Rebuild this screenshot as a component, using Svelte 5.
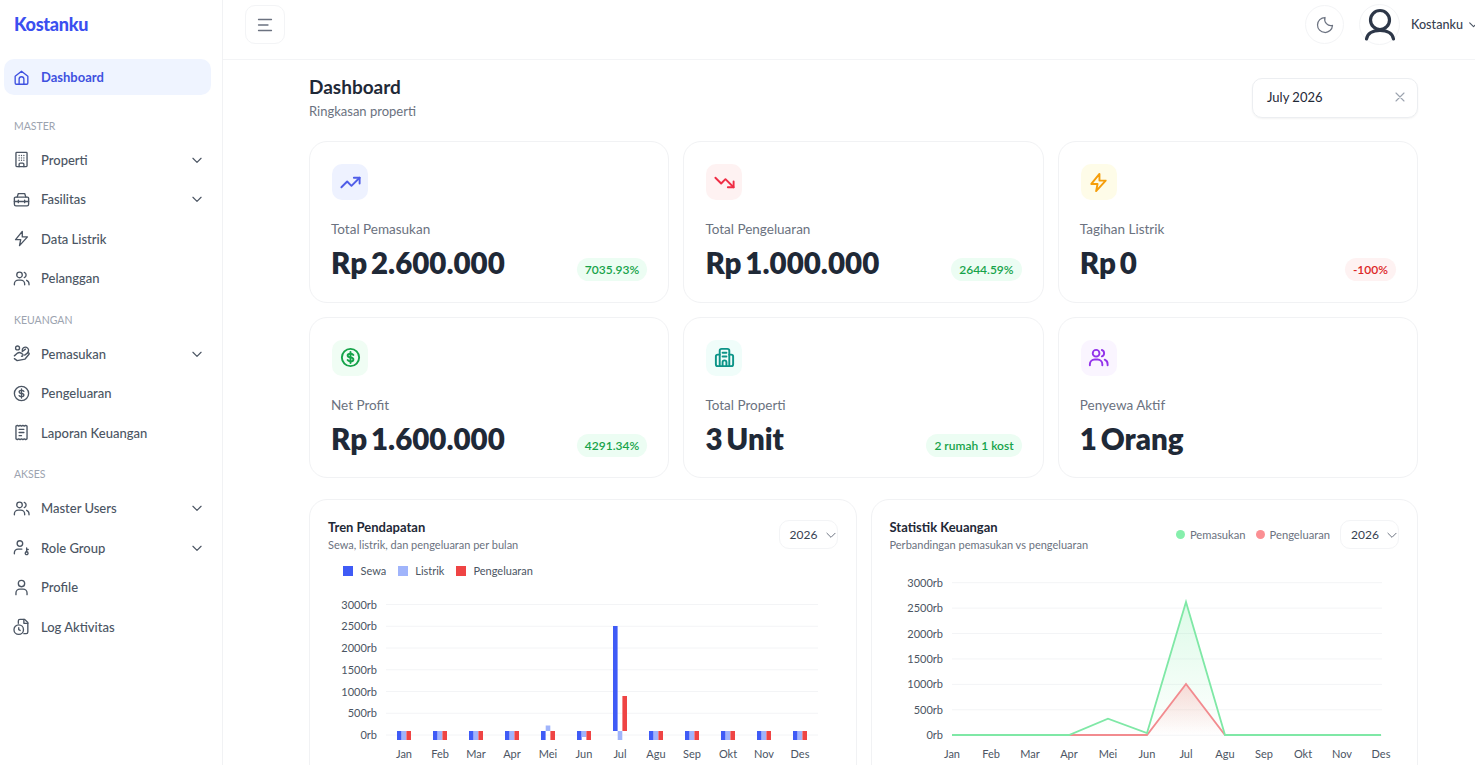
<script>
  const icons = {
    home: ['M4 10.500 12 4l8 6.500V19a1.500 1.500 0 0 1-1.500 1.500h-13A1.500 1.500 0 0 1 4 19z', 'M9 20.500V14a3 3 0 0 1 6 0v6.500'],
    building: ['M6 3h12a1 1 0 0 1 1 1v16a1 1 0 0 1-1 1H6a1 1 0 0 1-1-1V4a1 1 0 0 1 1-1z', 'M9 21v-3a1.500 1.500 0 0 1 1.500-1.500h3A1.500 1.500 0 0 1 15 18v3', 'M9 7h.01M12 7h.01M15 7h.01M9 10h.01M12 10h.01M15 10h.01M9 13h.01M12 13h.01M15 13h.01'],
    toolbox: ['M4.500 9h15A1.500 1.500 0 0 1 21 10.500V18a2 2 0 0 1-2 2H5a2 2 0 0 1-2-2v-7.500A1.500 1.500 0 0 1 4.500 9z', 'M6.500 9l1.500-4.500h8L17.500 9', 'M3 14.500h18', 'M8 13v3M16 13v3'],
    zap: ['M13 3 4.500 13.500H11L9.500 21 19.500 10H13z'],
    users: ['M9.500 11a3.500 3.500 0 1 0 0-7 3.500 3.500 0 0 0 0 7z', 'M3 20v-1a5 5 0 0 1 5-5h3a5 5 0 0 1 5 5v1', 'M15.500 4.200a3.500 3.500 0 0 1 0 6.600', 'M18.500 14.300A5 5 0 0 1 21.500 19v1'],
    hand: ['M7 7.500a2.500 2.500 0 1 0 0-5 2.500 2.500 0 0 0 0 5z', 'M3 15l4-3.500c1.500-1.200 3-1 4.500 0l2 1.500a1.400 1.400 0 0 1-1.500 2.300', 'M3 18.500l3.500 2.500 10-2 5-6c.8-1.200-.6-2.500-1.800-1.700L16 14', 'M13 8.500a4 4 0 1 1 6.500 2.500', 'M13 9.500l4-3'],
    dollar: ['M12 21a9 9 0 1 0 0-18 9 9 0 0 0 0 18z', 'M15 9.300C14.500 8.400 13.400 8 12 8c-1.700 0-3 .8-3 2s1.300 1.800 3 2 3 .8 3 2-1.300 2-3 2c-1.400 0-2.500-.4-3-1.300', 'M12 6.200v11.600'],
    receipt: ['M5 4l1.750-1 1.750 1 1.750-1 1.750 1 1.750-1 1.750 1 1.750-1 1.750 1v16l-1.750 1-1.750-1-1.750 1-1.750-1-1.750 1-1.750-1-1.750 1-1.750-1z', 'M9 8h6M9 12h6M9 16h3'],
    userkey: ['M10 10.500a3.500 3.500 0 1 0 0-7 3.500 3.500 0 0 0 0 7z', 'M3 20v-1.500A4.500 4.500 0 0 1 7.500 14h5', 'M18.500 21a1.800 1.800 0 1 0 0-3.600 1.800 1.800 0 0 0 0 3.600z', 'M18.500 17.400V12.500M18.500 14.500h2'],
    user: ['M12 11a4 4 0 1 0 0-8 4 4 0 0 0 0 8z', 'M5 21v-2a5 5 0 0 1 5-5h4a5 5 0 0 1 5 5v2'],
    fileclock: ['M8 8V5a2 2 0 0 1 2-2h6l4 4v12a2 2 0 0 1-2 2h-3', 'M15 3v5h5', 'M8.500 22a6 6 0 1 0 0-12 6 6 0 0 0 0 12z', 'M8.500 13.500V16l1.800 1'],
    trendup: ['M2.500 17l6-6 4.500 4.500 8.500-8.500', 'M15.500 7h6v6'],
    trenddown: ['M2.500 7l6 6 4.500-4.500 8.500 8.500', 'M15.500 17h6v-6'],
    office: ['M7 21V5a2 2 0 0 1 2-2h6a2 2 0 0 1 2 2v16', 'M7 9H5a2 2 0 0 0-2 2v8a2 2 0 0 0 2 2h14a2 2 0 0 0 2-2v-8a2 2 0 0 0-2-2h-2', 'M10 7h4M10 11h4', 'M10 21v-4a2 2 0 0 1 4 0v4'],
  };

  const groups = [
    { label: 'MASTER', items: [
      { icon: 'building', text: 'Properti', more: true },
      { icon: 'toolbox', text: 'Fasilitas', more: true },
      { icon: 'zap', text: 'Data Listrik' },
      { icon: 'users', text: 'Pelanggan' },
    ] },
    { label: 'KEUANGAN', items: [
      { icon: 'hand', text: 'Pemasukan', more: true },
      { icon: 'dollar', text: 'Pengeluaran' },
      { icon: 'receipt', text: 'Laporan Keuangan' },
    ] },
    { label: 'AKSES', items: [
      { icon: 'users', text: 'Master Users', more: true },
      { icon: 'userkey', text: 'Role Group', more: true },
      { icon: 'user', text: 'Profile' },
      { icon: 'fileclock', text: 'Log Aktivitas' },
    ] },
  ];

  const stats = [
    { icon: 'trendup', tone: 'indigo', label: 'Total Pemasukan', value: 'Rp 2.600.000', badge: '7035.93%' },
    { icon: 'trenddown', tone: 'red', label: 'Total Pengeluaran', value: 'Rp 1.000.000', badge: '2644.59%' },
    { icon: 'zap', tone: 'amber', label: 'Tagihan Listrik', value: 'Rp 0', badge: '-100%', down: true },
    { icon: 'dollar', tone: 'green', label: 'Net Profit', value: 'Rp 1.600.000', badge: '4291.34%' },
    { icon: 'office', tone: 'teal', label: 'Total Properti', value: '3 Unit', badge: '2 rumah 1 kost' },
    { icon: 'users', tone: 'purple', label: 'Penyewa Aktif', value: '1 Orang' },
  ];

  const months = ['Jan', 'Feb', 'Mar', 'Apr', 'Mei', 'Jun', 'Jul', 'Agu', 'Sep', 'Okt', 'Nov', 'Des'];
  const ticks = ['3000rb', '2500rb', '2000rb', '1500rb', '1000rb', '500rb', '0rb'];

  // [y, height] per month for each series, page coordinates
  const flat = [731, 9];
  const barRows = months.map((m) => {
    if (m === 'Mei') return { sewa: flat, listrik: [725.5, 5.5], keluar: flat };
    if (m === 'Jun') return { sewa: flat, listrik: [731, 6], keluar: flat };
    if (m === 'Jul') return { sewa: [626, 105], listrik: flat, keluar: [696, 35] };
    return { sewa: flat, listrik: flat, keluar: flat };
  });

  const lineX = (i) => 951 + i * 39;
  const income = [735, 735, 735, 735, 718.7, 733, 602, 735, 735, 735, 735, 735];
  const expense = [735, 735, 735, 735, 735, 735, 684, 735, 735, 735, 735, 735];
  const line = (ys) => ys.map((y, i) => `${lineX(i)},${y}`).join(' ');
  const area = (ys) => `951,735 ${line(ys)} 1380,735`;
</script>

{#snippet icon(name, size = 19, weight = 1.7)}
  <svg class="icon" width={size} height={size} viewBox="0 0 24 24" fill="none" stroke="currentColor" stroke-width={weight} stroke-linecap="round" stroke-linejoin="round">
    {#each icons[name] as d}
      <path {d} />
    {/each}
  </svg>
{/snippet}

{#snippet chevron(size = 14, weight = 2)}
  <svg class="chev" width={size} height={size} viewBox="0 0 24 24" fill="none" stroke="currentColor" stroke-width={weight} stroke-linecap="round" stroke-linejoin="round">
    <path d="M5 9l7 7 7-7" />
  </svg>
{/snippet}

<div class="shell">
  <aside class="sidebar">
    <div class="logo">Kostanku</div>
    <nav>
      <a class="item active">{@render icon('home')}<span>Dashboard</span></a>
      {#each groups as group}
        <div class="section">{group.label}</div>
        {#each group.items as item}
          <a class="item">
            {@render icon(item.icon)}
            <span>{item.text}</span>
            {#if item.more}{@render chevron()}{/if}
          </a>
        {/each}
      {/each}
    </nav>
  </aside>

  <div class="right">
    <header class="topbar">
      <button class="square" aria-label="Menu">
        <svg width="18" height="18" viewBox="0 0 18 18" fill="none" stroke="currentColor" stroke-width="1.300" stroke-linecap="round"><path d="M2.500 3.500h13M2.500 9h9.500M2.500 14.500h13" /></svg>
      </button>
      <div class="top-right">
        <button class="round" aria-label="Tema">
          <svg width="20" height="20" viewBox="0 0 24 24" fill="none" stroke="currentColor" stroke-width="1.500" stroke-linecap="round" stroke-linejoin="round"><path d="M12 3a7.500 7.500 0 0 0 9 9.500A9 9 0 1 1 12 3z" /></svg>
        </button>
        <div class="round avatar">
          <svg width="36" height="36" viewBox="0 0 36 36" fill="none" stroke="#2d3748" stroke-width="3.200" stroke-linecap="round"><circle cx="18" cy="13" r="9.500" /><path d="M4.500 32C5.500 26.500 10 23.500 18 23.500S30.500 26.500 31.500 32" /></svg>
        </div>
        <span class="who">Kostanku</span>
        {@render chevron(13)}
      </div>
    </header>

    <main>
      <div class="page-head">
        <div>
          <h1>Dashboard</h1>
          <p>Ringkasan properti</p>
        </div>
        <div class="date">
          <span>July 2026</span>
          <svg width="12" height="12" viewBox="0 0 12 12" fill="none" stroke="#9ca3af" stroke-width="1.100" stroke-linecap="round"><path d="M2 2l8 8M10 2l-8 8" /></svg>
        </div>
      </div>

      <section class="stats">
        {#each stats as s}
          <div class="stat">
            <div class="stat-icon {s.tone}">{@render icon(s.icon, 23, 2)}</div>
            <div class="stat-label">{s.label}</div>
            <div class="stat-row">
              <div class="stat-value">{s.value}</div>
              {#if s.badge}
                <span class="badge" class:down={s.down}>{s.badge}</span>
              {/if}
            </div>
          </div>
        {/each}
      </section>

      <section class="charts">
        <div class="chart-card">
          <div class="chart-head">
            <div>
              <h2>Tren Pendapatan</h2>
              <p>Sewa, listrik, dan pengeluaran per bulan</p>
            </div>
            <div class="year">2026 {@render chevron(14, 1.7)}</div>
          </div>
          <div class="square-legend">
            <span><i class="c-sewa"></i>Sewa</span>
            <span><i class="c-listrik"></i>Listrik</span>
            <span><i class="c-keluar"></i>Pengeluaran</span>
          </div>
          <svg class="plot" viewBox="310 590 546 175" width="546" height="175">
            {#each ticks as t, i}
              <line x1="386" x2="818" y1={604.500 + i * 21.750} y2={604.500 + i * 21.750} stroke="#f3f4f6" />
              <text x="377" y={608.500 + i * 21.750} text-anchor="end">{t}</text>
            {/each}
            {#each barRows as b, i}
              {@const cx = 404 + i * 36}
              <rect x={cx - 7} y={b.sewa[0]} width="4.600" height={b.sewa[1]} fill="#3f5bf6" />
              <rect x={cx - 2.300} y={b.listrik[0]} width="4.600" height={b.listrik[1]} fill="#a0b4fb" />
              <rect x={cx + 2.400} y={b.keluar[0]} width="4.600" height={b.keluar[1]} fill="#ef4444" />
              <text x={cx} y="757.500" text-anchor="middle">{months[i]}</text>
            {/each}
          </svg>
        </div>

        <div class="chart-card">
          <div class="chart-head">
            <div>
              <h2>Statistik Keuangan</h2>
              <p>Perbandingan pemasukan vs pengeluaran</p>
            </div>
            <div class="head-right">
              <span class="dot-item"><i class="dot green-dot"></i>Pemasukan</span>
              <span class="dot-item"><i class="dot red-dot"></i>Pengeluaran</span>
              <div class="year">2026 {@render chevron(14, 1.7)}</div>
            </div>
          </div>
          <svg class="plot plot-line" viewBox="871 570 547 195" width="547" height="195">
            <defs>
              <linearGradient id="fillGreen" x1="0" y1="0" x2="0" y2="1">
                <stop offset="0" stop-color="#86efac" stop-opacity="0.28" />
                <stop offset="1" stop-color="#86efac" stop-opacity="0" />
              </linearGradient>
              <linearGradient id="fillRed" x1="0" y1="0" x2="0" y2="1">
                <stop offset="0" stop-color="#fca5a5" stop-opacity="0.4" />
                <stop offset="1" stop-color="#fca5a5" stop-opacity="0" />
              </linearGradient>
            </defs>
            {#each ticks as t, i}
              <line x1="951" x2="1381" y1={582.700 + i * 25.420} y2={582.700 + i * 25.420} stroke="#f3f4f6" />
              <text x="942" y={586.700 + i * 25.420} text-anchor="end">{t}</text>
            {/each}
            <polygon points={area(income)} fill="url(#fillGreen)" />
            <polygon points={area(expense)} fill="url(#fillRed)" />
            <polyline points={line(expense)} fill="none" stroke="#f28b8f" stroke-width="1.800" />
            <polyline points={line(income)} fill="none" stroke="#7fe8a6" stroke-width="1.800" />
            {#each months as m, i}
              <text x={lineX(i)} y="757.500" text-anchor="middle">{m}</text>
            {/each}
          </svg>
        </div>
      </section>
    </main>
  </div>
</div>

<style>
  :global(body) {
    background: #fff;
    overflow: hidden;
  }

  .shell {
    display: flex;
    height: 765px;
    overflow: hidden;
    font-family: Lato, "Noto Sans", sans-serif;
    color: #1f2937;
  }

  .sidebar {
    flex: 0 0 223px;
    box-sizing: border-box;
    border-right: 1px solid #f1f2f4;
    padding: 0 11px 0 4px;
  }

  .logo {
    height: 49px;
    padding: 0 0 0 10px;
    line-height: 49px;
    font-size: 18px;
    font-weight: 900;
    letter-spacing: -0.300px;
    color: #3b4ff0;
  }

  nav {
    margin-top: 10px;
  }

  .item {
    display: flex;
    align-items: center;
    height: 36px;
    margin-bottom: 3.500px;
    padding: 0 7px 0 8px;
    border-radius: 10px;
    font-size: 13px;
    font-weight: 500;
    color: #4b5563;
  }

  .item .icon {
    margin-right: 10px;
    flex: none;
  }

  .item span {
    flex: 1;
  }

  .item.active {
    background: #eff4ff;
    color: #3f51e0;
    font-weight: 700;
    margin-bottom: 23.500px;
  }

  .section {
    height: 14px;
    line-height: 14px;
    margin: 16.700px 0 9px 10px;
    font-size: 10.500px;
    color: #9ca3af;
  }

  .item.active + .section {
    margin-top: 0;
  }

  .chev {
    color: #4b5563;
    flex: none;
  }

  .right {
    flex: 1;
    min-width: 0;
  }

  .topbar {
    display: flex;
    justify-content: space-between;
    align-items: center;
    box-sizing: border-box;
    height: 60px;
    padding: 0 0 10px 22px;
    border-bottom: 1px solid #f3f4f6;
  }

  .square,
  .round {
    display: flex;
    align-items: center;
    justify-content: center;
    width: 39px;
    height: 39px;
    padding: 0;
    background: #fff;
    border: 1px solid #f3f4f6;
    color: #6b7280;
  }

  .square {
    width: 40px;
    border-radius: 10px;
  }

  .round {
    border-radius: 50%;
  }

  .top-right {
    display: flex;
    align-items: center;
    margin-right: -5px;
  }

  .avatar {
    margin-left: 15px;
  }

  .who {
    margin: 0 4px 0 11px;
    font-size: 12.600px;
    font-weight: 500;
    color: #374151;
  }

  main {
    padding: 17px 57px 0 86px;
  }

  .page-head {
    display: flex;
    justify-content: space-between;
    align-items: flex-start;
    height: 64px;
  }

  h1 {
    margin: -1px 0 0;
    font-size: 19px;
    line-height: 22px;
    font-weight: 700;
    color: #1f2937;
  }

  .page-head p {
    margin: 3px 0 0;
    font-size: 13px;
    line-height: 20px;
    color: #6b7280;
  }

  .date {
    display: flex;
    justify-content: space-between;
    align-items: center;
    box-sizing: border-box;
    width: 166px;
    height: 40px;
    margin-top: 1px;
    padding: 0 11px 2px 14px;
    border: 1px solid #eceef1;
    border-radius: 10px;
    box-shadow: 0 1px 2px rgba(0, 0, 0, 0.05);
    font-size: 13px;
    color: #1f2937;
  }

  .stats {
    display: grid;
    grid-template-columns: repeat(3, 1fr);
    gap: 14px 14.250px;
  }

  .stat {
    box-sizing: border-box;
    height: 161.500px;
    padding: 22px 22px 0;
    border: 1px solid #f1f2f4;
    border-radius: 18px;
  }

  .stat-icon {
    display: flex;
    align-items: center;
    justify-content: center;
    width: 36px;
    height: 36px;
    border-radius: 10px;
  }

  .indigo { background: #eef2ff; color: #4f5de8; }
  .red { background: #fef2f2; color: #ef2d45; }
  .amber { background: #fefce8; color: #f59e0b; }
  .green { background: #f0fdf4; color: #16a34a; }
  .teal { background: #f0fdfa; color: #0d9488; }
  .purple { background: #faf5ff; color: #9333ea; }

  .stat-label {
    margin: 20px 0 0 -1px;
    font-size: 13.500px;
    line-height: 18px;
    color: #6b7280;
  }

  .stat-row {
    display: flex;
    justify-content: space-between;
    align-items: flex-end;
    margin-top: 6px;
  }

  .stat-value {
    margin-left: -1px;
    font-size: 29.500px;
    line-height: 38px;
    font-weight: 800;
    word-spacing: -3px;
    color: #1f2937;
  }

  .badge {
    margin: 0 -1px 1px 0;
    padding: 0 8px;
    border-radius: 12px;
    background: #ecfdf3;
    font-size: 12px;
    line-height: 23px;
    font-weight: 600;
    color: #16a34a;
  }

  .badge.down {
    background: #fef2f2;
    color: #dc2626;
  }

  .charts {
    display: grid;
    grid-template-columns: 1fr 1fr;
    gap: 14px;
    margin-top: 21px;
  }

  .chart-card {
    box-sizing: border-box;
    height: 300px;
    border: 1px solid #f1f2f4;
    border-radius: 18px;
    padding: 19px 18px 0;
    position: relative;
  }

  .chart-head {
    display: flex;
    justify-content: space-between;
    align-items: flex-start;
  }

  h2 {
    margin: 0;
    font-size: 13px;
    line-height: 16px;
    font-weight: 700;
    color: #1f2937;
  }

  .chart-head p {
    margin: 3px 0 0;
    font-size: 11px;
    line-height: 14px;
    color: #6b7280;
  }

  .year {
    display: flex;
    align-items: center;
    justify-content: space-between;
    box-sizing: border-box;
    width: 59px;
    height: 29px;
    margin-top: 1px;
    padding: 0 0 0 10px;
    border: 1px solid #f3f4f6;
    border-radius: 10px;
    font-size: 12px;
    color: #374151;
  }

  .year .chev {
    margin-right: -1px;
    color: #6b7280;
  }

  .head-right {
    display: flex;
    align-items: center;
  }

  .dot-item {
    display: flex;
    align-items: center;
    margin-top: 1px;
    margin-right: 10px;
    font-size: 11.200px;
    color: #6b7280;
  }

  .dot {
    width: 9px;
    height: 9px;
    margin-right: 5px;
    border-radius: 50%;
  }

  .green-dot { background: #86efac; }
  .red-dot { background: #fb8f93; }

  .square-legend {
    display: flex;
    margin: 10.500px 0 0 15px;
    gap: 11.500px;
    font-size: 11px;
    line-height: 16px;
    color: #4b5563;
  }

  .square-legend span {
    display: flex;
    align-items: center;
  }

  .square-legend i {
    width: 10px;
    height: 10px;
    margin-right: 7.500px;
  }

  .c-sewa { background: #3f5bf6; }
  .c-listrik { background: #a0b4fb; }
  .c-keluar { background: #ef4444; }

  .plot {
    display: block;
    position: absolute;
    left: 0;
    top: 90px;
  }

  .plot-line {
    top: 70px;
  }

  .plot text {
    font-size: 11px;
    fill: #4b5563;
  }
</style>
